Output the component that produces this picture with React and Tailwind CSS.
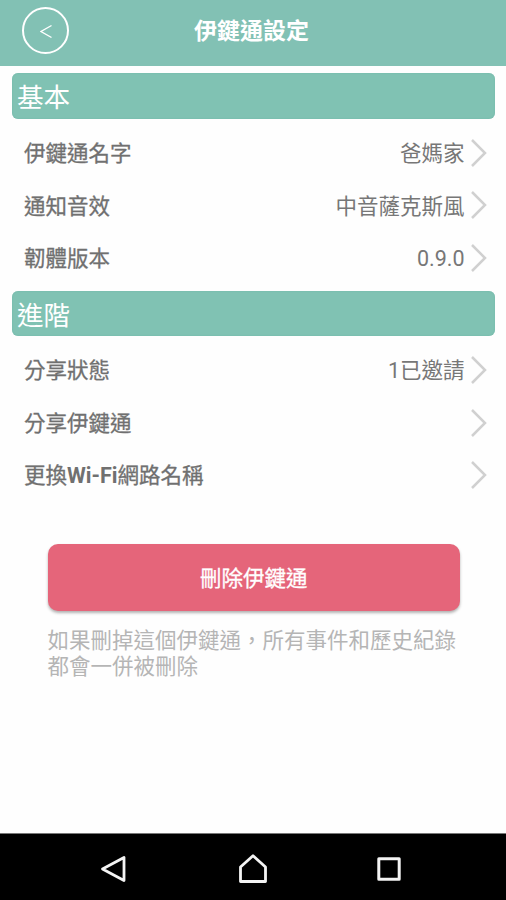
function Chevron() {
  return (
    <svg className="ml-[6px] h-[28px] w-[16px] shrink-0" viewBox="0 0 16 28" fill="none" stroke="#d0d0d0" strokeWidth="2.5">
      <path d="M1 1 L14 14 L1 27" />
    </svg>
  );
}

function Section({ title, className }) {
  return (
    <h2
      className={`flex h-[45.5px] items-center rounded-[6px] bg-[#80c2b3] pl-[5px] text-[26.6px] font-normal leading-none text-white shadow-[inset_0_0_2px_#6fb5a6] ${className}`}
    >
      <span className="pt-[5px]">{title}</span>
    </h2>
  );
}

function Row({ label, value }) {
  return (
    <li className="flex h-[52.4px] items-center pr-[8.5px] pl-[12px] text-[21.5px] leading-none text-[#777]">
      <span className="grow pt-[2px] text-[#707070] [-webkit-text-stroke:0.3px_#707070]">{label}</span>
      <span className="pt-[2px]">{value}</span>
      <Chevron />
    </li>
  );
}

export default function App() {
  return (
    <div className="flex h-[900px] w-[506px] flex-col overflow-hidden bg-[#fefefe] font-[Roboto,'Noto_Sans_CJK_TC',sans-serif]">
      <header className="grid h-[66px] shrink-0 grid-cols-[92px_1fr_95px] items-center bg-[#82c1b4] text-white">
        <button className="-mt-[6px] ml-[22px] flex size-[47px] items-center justify-center rounded-full border-2 border-white">
          <svg className="mt-[3px] h-[15px] w-[12px]" viewBox="0 0 12 15" fill="none" stroke="white" strokeWidth="1.4">
            <path d="M11.5 1.5 L1 7.5 L11.5 13.5" />
          </svg>
        </button>
        <h1 className="-mt-[3px] text-center text-[23px] font-bold leading-none">伊鍵通設定</h1>
      </header>

      <main className="flex grow flex-col pr-[11px] pl-[12px]">
        <Section title="基本" className="mt-[7px]" />
        <ul className="mt-[8.3px]">
          <Row label="伊鍵通名字" value="爸媽家" />
          <Row label="通知音效" value="中音薩克斯風" />
          <Row label="韌體版本" value="0.9.0" />
        </ul>
        <Section title="進階" className="mt-[6.7px]" />
        <ul className="mt-[7.8px]">
          <Row label="分享狀態" value="1已邀請" />
          <Row label="分享伊鍵通" value="" />
          <Row
            label={
              <>
                更換<span className="font-bold [-webkit-text-stroke:0px]">Wi-Fi</span>網路名稱
              </>
            }
            value=""
          />
        </ul>
        <div className="mt-[42.5px] pr-[35px] pl-[35.5px]">
          <button className="flex h-[67px] w-full items-center justify-center rounded-[10px] bg-[#e5657a] pt-[3px] text-[21.5px] leading-none text-white shadow-[0_2px_3px_#0000004d] [-webkit-text-stroke:0.3px_white]">
            刪除伊鍵通
          </button>
          <p className="mt-[17.5px] text-[21.5px] leading-[25.5px] whitespace-nowrap text-[#b5b5b5]">
            如果刪掉這個伊鍵通，所有事件和歷史紀錄
            <br />
            都會一併被刪除
          </p>
        </div>
      </main>

      <nav className="flex h-[67px] shrink-0 items-center justify-between border-t border-[#777] bg-black pt-[4px] pr-[104px] pl-[100px]">
        <svg className="size-[28px]" viewBox="0 0 28 28" fill="none" stroke="#f4f4f4" strokeWidth="2.8" strokeLinejoin="round">
          <path d="M24 2.5 V25.5 L2.5 14 Z" />
        </svg>
        <svg className="ml-[2px] h-[30px] w-[30px]" viewBox="0 0 30 30" fill="none" stroke="#f4f4f4" strokeWidth="2.8" strokeLinejoin="round">
          <path d="M15 1.8 L27.5 13 V27.5 H2.5 V13 Z" />
        </svg>
        <svg className="size-[26px]" viewBox="0 0 26 26" fill="none" stroke="#f4f4f4" strokeWidth="3" strokeLinejoin="round">
          <path d="M2.8 2.8 H23.2 V23.2 H2.8 Z" />
        </svg>
      </nav>
    </div>
  );
}
